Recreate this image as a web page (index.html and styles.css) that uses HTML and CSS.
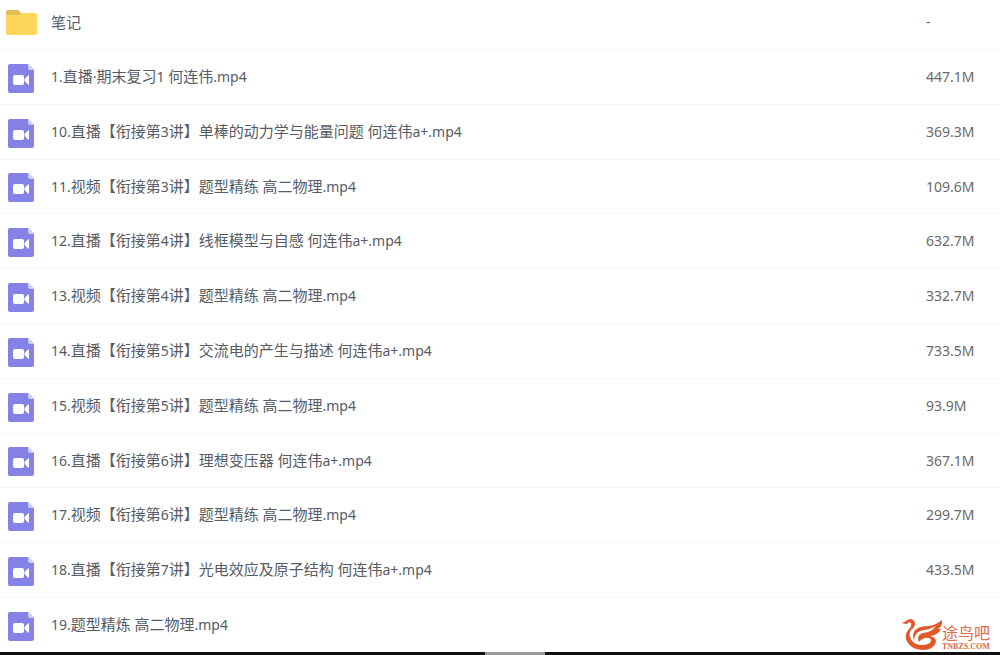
FILE: index.html
```html
<!DOCTYPE html>
<html lang="zh-CN">
<head>
<meta charset="utf-8">
<title>文件列表</title>
<link rel="stylesheet" href="styles.css">
</head>
<body>
<svg class="defs" aria-hidden="true">
  <symbol id="video" viewBox="0 0 26 29">
    <path fill="#8482e6" d="M2 0H20L26 6V27a2 2 0 0 1-2 2H2a2 2 0 0 1-2-2V2A2 2 0 0 1 2 0Z"/>
    <path fill="#cfcdfa" d="M20 0L26 6H22a2 2 0 0 1-2-2Z"/>
    <rect x="5" y="11" width="11" height="10" rx="2" fill="#fff"/>
    <path fill="#fff" d="M16.500 15L20 11.500q1-.8 1 .5v8q0 1.300-1 .5L16.500 17Z"/>
  </symbol>
</svg>
<main class="files">
<table class="list">
<tbody>
<tr class="row folder-row"><td class="icon"><svg class="folder" viewBox="0 0 31 26" role="img" aria-label="文件夹"><path fill="#e3bd56" d="M2 0H12l3 3V8H0V2A2 2 0 0 1 2 0Z"/><path fill="#fed65b" d="M0 5H13l2-2H29a2 2 0 0 1 2 2V23a2 2 0 0 1-2 2H2a2 2 0 0 1-2-2Z"/></svg></td><td class="name">笔记</td><td class="size">-</td></tr>
<tr class="row"><td class="icon"><svg class="video"><use href="#video"/></svg></td><td class="name"><span class="latin">1.</span>直播<span class="latin">·</span>期末复习<span class="latin">1 </span>何连伟<span class="latin">.mp4</span></td><td class="size">447.1M</td></tr>
<tr class="row"><td class="icon"><svg class="video"><use href="#video"/></svg></td><td class="name"><span class="latin">10.</span>直播【衔接第<span class="latin">3</span>讲】单棒的动力学与能量问题<span class="latin"> </span>何连伟<span class="latin">a+.mp4</span></td><td class="size">369.3M</td></tr>
<tr class="row"><td class="icon"><svg class="video"><use href="#video"/></svg></td><td class="name"><span class="latin">11.</span>视频【衔接第<span class="latin">3</span>讲】题型精练<span class="latin"> </span>高二物理<span class="latin">.mp4</span></td><td class="size">109.6M</td></tr>
<tr class="row"><td class="icon"><svg class="video"><use href="#video"/></svg></td><td class="name"><span class="latin">12.</span>直播【衔接第<span class="latin">4</span>讲】线框模型与自感<span class="latin"> </span>何连伟<span class="latin">a+.mp4</span></td><td class="size">632.7M</td></tr>
<tr class="row"><td class="icon"><svg class="video"><use href="#video"/></svg></td><td class="name"><span class="latin">13.</span>视频【衔接第<span class="latin">4</span>讲】题型精练<span class="latin"> </span>高二物理<span class="latin">.mp4</span></td><td class="size">332.7M</td></tr>
<tr class="row"><td class="icon"><svg class="video"><use href="#video"/></svg></td><td class="name"><span class="latin">14.</span>直播【衔接第<span class="latin">5</span>讲】交流电的产生与描述<span class="latin"> </span>何连伟<span class="latin">a+.mp4</span></td><td class="size">733.5M</td></tr>
<tr class="row"><td class="icon"><svg class="video"><use href="#video"/></svg></td><td class="name"><span class="latin">15.</span>视频【衔接第<span class="latin">5</span>讲】题型精练<span class="latin"> </span>高二物理<span class="latin">.mp4</span></td><td class="size">93.9M</td></tr>
<tr class="row"><td class="icon"><svg class="video"><use href="#video"/></svg></td><td class="name"><span class="latin">16.</span>直播【衔接第<span class="latin">6</span>讲】理想变压器<span class="latin"> </span>何连伟<span class="latin">a+.mp4</span></td><td class="size">367.1M</td></tr>
<tr class="row"><td class="icon"><svg class="video"><use href="#video"/></svg></td><td class="name"><span class="latin">17.</span>视频【衔接第<span class="latin">6</span>讲】题型精练<span class="latin"> </span>高二物理<span class="latin">.mp4</span></td><td class="size">299.7M</td></tr>
<tr class="row"><td class="icon"><svg class="video"><use href="#video"/></svg></td><td class="name"><span class="latin">18.</span>直播【衔接第<span class="latin">7</span>讲】光电效应及原子结构<span class="latin"> </span>何连伟<span class="latin">a+.mp4</span></td><td class="size">433.5M</td></tr>
<tr class="row"><td class="icon"><svg class="video"><use href="#video"/></svg></td><td class="name"><span class="latin">19.</span>题型精炼<span class="latin"> </span>高二物理<span class="latin">.mp4</span></td><td class="size"></td></tr>
</tbody>
</table>
<div class="brand">
  <svg class="bird" viewBox="0 0 40 32" aria-hidden="true">
    <path fill="#e0592b" d="M0 4L4 2Q6 0 9 0Q13 1 13 5Q13 8 9 11Q7 14 8 18Q10 25 19 26Q28 26 29 22Q29 18 23 19Q19 20 17 23Q14 16 21 14Q30 13 34 7Q29 10 22 11Q13 12 12 21Q9 13 16 9Q20 7 27 7Q34 6 40 1Q41 7 36 10L39 10Q36 16 28 17Q34 18 34 23Q32 30 22 31Q8 31 4 20Q3 14 7 10Q10 7 9 4Q7 2 5 5Q3 5 0 4Z"/>
  </svg>
  <div class="brand-text"><span class="brand-name">途鸟吧</span><span class="brand-url">TNBZS.COM</span></div>
</div>
</main>
<div class="track"><div class="thumb"></div></div>
</body>
</html>
```
FILE: styles.css
```css
body {
  margin: 0;
  background: #fff;
  color: #565b66;
  font-family: "Noto Sans", "Noto Sans CJK SC", sans-serif;
  font-size: 15px;
  line-height: 20px;
}

.defs {
  position: absolute;
  width: 0;
  height: 0;
}

.files {
  position: relative;
}

.list {
  width: 100%;
  border-collapse: separate;
  border-spacing: 0;
  table-layout: fixed;
}

.row td {
  box-sizing: border-box;
  height: 55px;
  padding: 0;
  border-bottom: 1px solid #f5f6f9;
  vertical-align: middle;
}

.row:nth-child(5n - 1) td {
  height: 54px;
}

.row.folder-row td {
  height: 50px;
  padding-bottom: 5px;
}

.row:last-child td {
  height: 54px;
  border-bottom: 0;
}

.row .icon {
  width: 51px;
  padding-left: 8px;
}

.folder-row .icon {
  padding-left: 6px;
}

.video,
.folder {
  display: block;
  width: 26px;
  height: 29px;
  margin-top: 2px;
}

.folder {
  width: 31px;
  height: 26px;
}

.row .name {
  padding-bottom: 1px;
  white-space: nowrap;
}

.row.folder-row .name {
  padding-bottom: 6px;
}

.latin,
.size {
  font-size: 14px;
}

.row .size {
  width: 74px;
  color: #6a6a6a;
}

.brand {
  position: absolute;
  right: 10px;
  bottom: 1px;
  display: flex;
  align-items: flex-end;
  color: #dc6b48;
}

.bird {
  width: 40px;
  height: 32px;
}

.brand-text {
  display: flex;
  flex-direction: column;
  gap: 3px;
}

.brand-name {
  font-family: "Noto Sans CJK SC", sans-serif;
  font-size: 16px;
  line-height: 16px;
}

.brand-url {
  font-family: "Liberation Serif", serif;
  font-size: 8px;
  font-weight: bold;
  line-height: 8px;
}

.track {
  display: flex;
  justify-content: center;
  height: 3px;
  padding-left: 29px;
  background: #111;
}

.thumb {
  width: 60px;
  background: #999;
}
```
